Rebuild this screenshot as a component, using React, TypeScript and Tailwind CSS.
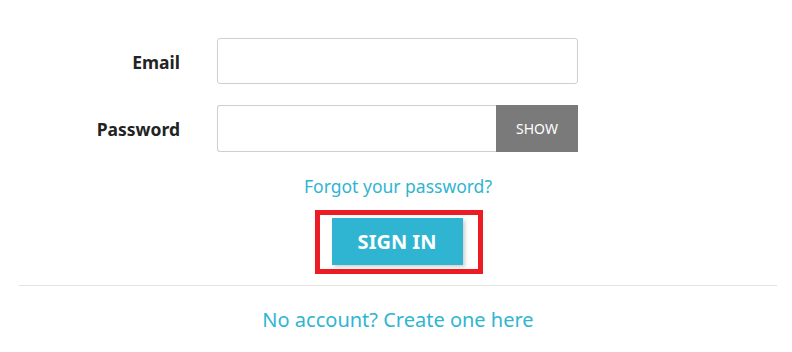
import React from 'react';

export default function App() {
  return (
    <div className="w-full bg-white border-b border-[#dedede] font-['Noto_Sans',sans-serif]">
      <div className="ml-[19px] mr-[15px] pt-[38px]">
        {/* Email row */}
        <div className="flex items-center">
          <label className="w-[161px] pt-[3px] text-right text-[17.5px] font-bold text-[#232323]">Email</label>
          <input
            type="email"
            className="ml-[37px] w-[361px] h-[46px] border border-[#cfcfcf] rounded-[3px] bg-white outline-none px-3"
          />
        </div>

        {/* Password row */}
        <div className="flex items-center mt-[21px]">
          <label className="w-[161px] pt-[2px] text-right text-[17.5px] font-bold text-[#232323]">Password</label>
          <div className="ml-[37px] flex w-[361px] h-[47px]">
            <input
              type="password"
              className="flex-1 min-w-0 h-full border border-r-0 border-[#cfcfcf] rounded-l-[3px] bg-white outline-none px-3"
            />
            <button className="w-[82px] h-full bg-[#7a7a7a] text-white text-[14px] uppercase">Show</button>
          </div>
        </div>

        {/* Forgot link */}
        <div className="mt-[22px] text-center leading-[24px]">
          <a className="text-[17.5px] text-[#2fb5d2]">Forgot your password?</a>
        </div>

        {/* Sign in */}
        <div className="mt-[11px] flex justify-center">
          <div className="border-[5px] border-[#ed1c24] pl-[12px] pr-[15px] pt-[3px] pb-[4px] ml-[1px]">
            <button className="w-[131px] h-[47px] bg-[#2fb5d2] text-white text-[20px] font-bold uppercase shadow-[2px_2px_4px_0_rgba(0,0,0,0.2)]">
              Sign in
            </button>
          </div>
        </div>

        {/* Divider + create account */}
        <div className="mt-[11px] border-t border-[#e3e3e3] pt-[20px] pb-[18px] text-center leading-[27px]">
          <a className="text-[20px] text-[#2fb5d2]">No account? Create one here</a>
        </div>
      </div>
    </div>
  );
}
